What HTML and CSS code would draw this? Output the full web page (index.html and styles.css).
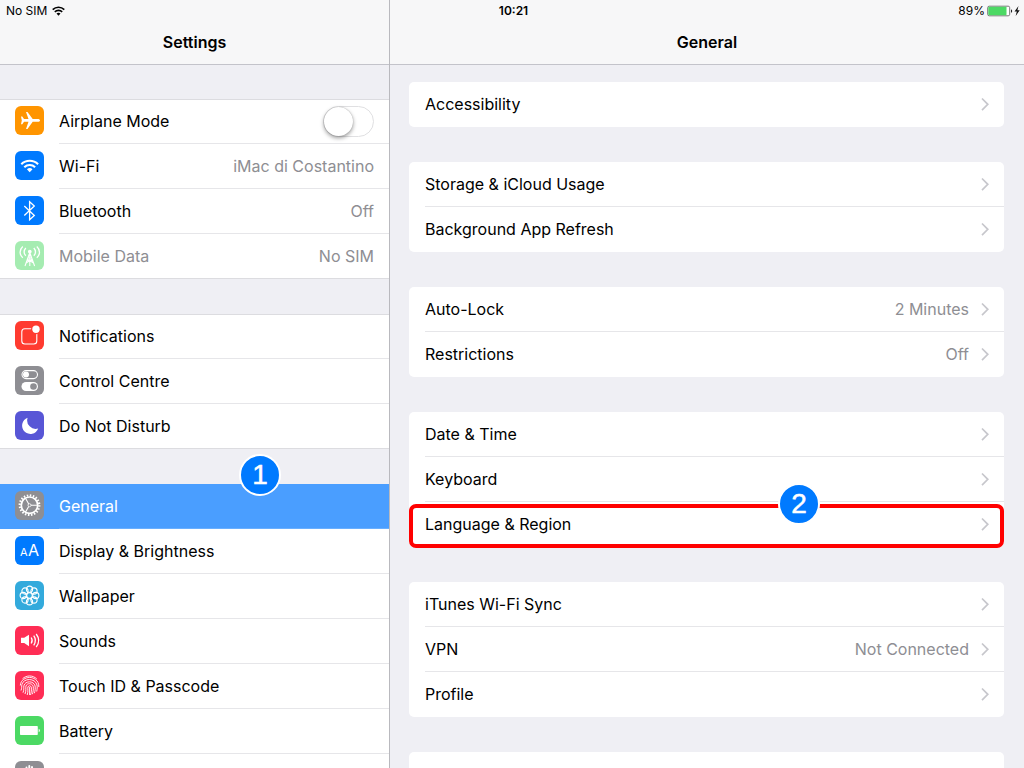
FILE: index.html
```html
<!DOCTYPE html>
<html lang="en-GB">
<head>
<meta charset="utf-8">
<meta name="viewport" content="width=device-width, initial-scale=1">
<title>Settings</title>
<link rel="stylesheet" href="styles.css">
</head>
<body>
<svg class="defs" aria-hidden="true">
  <symbol id="chevron" viewBox="0 0 8 14"><path d="M1 1.500l5.800 5.800L1 13.100" fill="none" stroke="#c7c7cc" stroke-width="1.700"/></symbol>
</svg>
<div class="app">
  <div class="status">
    <div class="status-left">
      <span>No SIM</span>
      <svg width="13" height="10" viewBox="0 0 13 10" fill="none" stroke="#000" stroke-width="1.6"><path d="M.7 3.6a8.3 8.3 0 0 1 11.6 0M2.8 5.9a5.3 5.3 0 0 1 7.4 0"/><path d="M4.5 7.6a2.9 2.9 0 0 1 4 0L6.500 9.800z" fill="#000" stroke="none"/></svg>
    </div>
    <time class="clock">10:21</time>
    <div class="status-right">
      <span>89%</span>
      <svg width="34" height="12" viewBox="0 0 34 12"><rect x=".7" y="1.200" width="22" height="9.600" rx="1.500" fill="#fff" stroke="#777"/><rect x="1.300" y="1.800" width="18.200" height="8.400" rx=".8" fill="#4cd964"/><path d="M24 4.200c1.600.5 1.600 3.100 0 3.600z" fill="#222"/><path d="M31.500 1l-4 5.600h2.300L28.700 11l4-5.800h-2.300z" fill="#111"/></svg>
    </div>
  </div>

  <aside class="pane sidebar">
    <header class="bar"><h1>Settings</h1></header>
    <nav class="scroll" aria-label="Settings">
      <div class="group">
        <div class="item">
          <svg class="icon orange" viewBox="0 0 29 29"><path d="M25 14.400c0-.8-1-1.400-2.300-1.400h-5L12.500 6H11l2.500 7H9l-1.700-2.500H6l.8 3.900L6 18.300h1.300L9 15.800h4.500L11 23h1.500l5.200-7.200h5c1.300 0 2.300-.6 2.300-1.400z" fill="#fff"/></svg>
          <div class="body"><label class="label" for="airplane">Airplane Mode</label><input class="switch" id="airplane" type="checkbox" role="switch"></div>
        </div>
        <a class="item" href="#wifi">
          <svg class="icon blue" viewBox="0 0 29 29" fill="none" stroke="#fff" stroke-width="2.100"><path d="M6.300 13.200a12 12 0 0 1 16.800 0M9.300 16.200a7.800 7.800 0 0 1 10.800 0"/><path d="M11.900 18.300a4 4 0 0 1 5.600 0l-2.800 3z" fill="#fff" stroke="none"/></svg>
          <span class="body"><span class="label">Wi-Fi</span><span class="value">iMac di Costantino</span></span>
        </a>
        <a class="item" href="#bluetooth">
          <svg class="icon blue" viewBox="0 0 29 29" fill="none" stroke="#fff" stroke-width="1.300"><path d="M9.300 10l10 9.500-4.700 4.300V5.800l4.700 4.200-10 9.500"/></svg>
          <span class="body"><span class="label">Bluetooth</span><span class="value">Off</span></span>
        </a>
        <a class="item" href="#mobile">
          <svg class="icon mint" viewBox="0 0 29 29" fill="none" stroke="#fff" stroke-width="1.100"><path d="M10 25l4.800-13.500L19.600 25M11 22l6.500-4M18.600 22L12 18M12.800 17h4M14.800 12v13"/><circle cx="14.800" cy="10.500" r="1.300" fill="#fff"/><path d="M10.800 7c-2 2.300-2 5.500 0 7.800M18.800 7c2 2.300 2 5.500 0 7.800M7.800 5.500c-3.600 3.300-3.600 8 0 11.300M21.800 5.500c3.600 3.300 3.600 8 0 11.300" stroke-width="1.300"/></svg>
          <span class="body"><span class="label muted">Mobile Data</span><span class="value">No SIM</span></span>
        </a>
      </div>

      <div class="group">
        <a class="item" href="#notifications">
          <svg class="icon red" viewBox="0 0 29 29"><rect x="6.800" y="7.700" width="15" height="15.300" rx="3" fill="none" stroke="#fff" stroke-width="1.100"/><circle cx="21" cy="8.300" r="5" fill="#ff3b30"/><circle cx="21" cy="8.300" r="3.700" fill="#fff"/></svg>
          <span class="body"><span class="label">Notifications</span></span>
        </a>
        <a class="item" href="#control-centre">
          <svg class="icon grey" viewBox="0 0 29 29"><rect x="7" y="4.600" width="15.500" height="8" rx="4" fill="none" stroke="#fff" stroke-width="1.100"/><circle cx="11" cy="8.600" r="3" fill="#fff"/><rect x="6.500" y="16" width="16.500" height="9" rx="4.500" fill="#fff"/><circle cx="18.500" cy="20.500" r="3.300" fill="#8e8e93"/></svg>
          <span class="body"><span class="label">Control Centre</span></span>
        </a>
        <a class="item" href="#dnd">
          <svg class="icon indigo" viewBox="0 0 29 29"><path d="M12.600 6.800a8.300 8.300 0 1 0 10.600 10.700A8.500 8.500 0 0 1 12.600 6.800z" fill="#fff"/></svg>
          <span class="body"><span class="label">Do Not Disturb</span></span>
        </a>
      </div>

      <div class="group">
        <a class="item selected" href="#general" aria-current="page">
          <svg class="icon grey" viewBox="0 0 29 29" fill="none" stroke="#fff"><circle cx="14.500" cy="14.200" r="9.800" stroke-width="2.200" stroke-dasharray="1.500 1.579"/><circle cx="14.500" cy="14.200" r="8.200" stroke-width="1.700"/><circle cx="14.500" cy="14.200" r="1.500" stroke-width=".8"/><path d="M16 14.200h7M13.700 12.900L10.400 7.100M13.700 15.500l-3.300 5.800" stroke-width="1.100"/></svg>
          <span class="body"><span class="label">General</span></span>
          <span class="step step-one">1</span>
        </a>
        <a class="item" href="#display">
          <svg class="icon blue aa" viewBox="0 0 29 29" fill="#fff"><text x="5" y="20" font-size="11">A</text><text x="13" y="20" font-size="16">A</text></svg>
          <span class="body"><span class="label">Display &amp; Brightness</span></span>
        </a>
        <a class="item" href="#wallpaper">
          <svg class="icon cyan" viewBox="0 0 29 29" fill="none" stroke="#fff" stroke-width="1.100"><circle cx="14.500" cy="14.500" r="2.800"/><circle cx="14.500" cy="8.200" r="3.100"/><circle cx="19" cy="10" r="3.100"/><circle cx="20.800" cy="14.500" r="3.100"/><circle cx="19" cy="19" r="3.100"/><circle cx="14.500" cy="20.800" r="3.100"/><circle cx="10" cy="19" r="3.100"/><circle cx="8.200" cy="14.500" r="3.100"/><circle cx="10" cy="10" r="3.100"/></svg>
          <span class="body"><span class="label">Wallpaper</span></span>
        </a>
        <a class="item" href="#sounds">
          <svg class="icon pink" viewBox="0 0 29 29" fill="none" stroke="#fff" stroke-width="1.300"><path d="M6 11.800h3.200L14 8.800v11.500l-4.800-3.200H6z" fill="#fff" stroke="none"/><path d="M16.200 11.500c1.300 2 1.300 4 0 6M18.700 9.700c2.300 3.200 2.300 6.300 0 9.600M21.200 8c3.300 4.300 3.300 8.700 0 13"/></svg>
          <span class="body"><span class="label">Sounds</span></span>
        </a>
        <a class="item" href="#touch-id">
          <svg class="icon pink" viewBox="0 0 29 29" fill="none" stroke="#fff" stroke-width=".9"><path d="M7.500 7.800C11.500 4 18 4 21.800 8M5.300 14.500c.2-3.200 1.700-5 3.300-6.100 3.600-2.600 8.300-2.600 11.900 0 2.300 1.700 3.500 4.500 3.300 7.600M6 19.500c1-2.500.5-4 .9-6 1.600-6.600 13.300-6.800 15.100.5.4 2 .2 4-.3 6.500M8 21.700c1.300-3 .5-5 .9-7 1.200-5.200 9.900-5.200 11.200.3.400 2.500 0 4.700-.7 7.200M10 23c1.500-4 .5-5.700.9-7.800 1-3.400 6.200-3.400 7.300.2.400 2.600 0 5.100-.8 7.800M12.200 24c1.300-4 .3-6 .7-8 .6-1.600 2.800-1.600 3.400.2.400 2.700 0 5.300-.8 7.800M14.600 16v8"/></svg>
          <span class="body"><span class="label">Touch ID &amp; Passcode</span></span>
        </a>
        <a class="item" href="#battery">
          <svg class="icon green" viewBox="0 0 29 29" fill="#fff"><rect x="5" y="10" width="17.800" height="9" rx=".8"/><path d="M23.700 12.800c1.600.5 1.600 2.900 0 3.400z"/></svg>
          <span class="body"><span class="label">Battery</span></span>
        </a>
        <a class="item" href="#privacy">
          <svg class="icon grey" viewBox="0 0 29 29" fill="none" stroke="#fff" stroke-width="1.900" stroke-linecap="round"><path d="M11.500 14V6.500M14.300 13V5M17 13.500V6M19.500 15V9"/><path d="M10.500 13h10v5c0 4-2 6-5 6-3.500 0-5-2.500-8-8l3 1z" fill="#fff" stroke="none"/></svg>
          <span class="body"><span class="label">Privacy</span></span>
        </a>
      </div>
    </nav>
  </aside>

  <main class="pane detail">
    <header class="bar"><h2>General</h2></header>
    <div class="scroll cards">
      <div class="card">
        <a class="row" href="#accessibility"><span class="label">Accessibility</span><svg class="chevron"><use href="#chevron"/></svg></a>
      </div>
      <div class="card">
        <a class="row" href="#storage"><span class="label">Storage &amp; iCloud Usage</span><svg class="chevron"><use href="#chevron"/></svg></a>
        <a class="row" href="#refresh"><span class="label">Background App Refresh</span><svg class="chevron"><use href="#chevron"/></svg></a>
      </div>
      <div class="card">
        <a class="row" href="#auto-lock"><span class="label">Auto-Lock</span><span class="value">2 Minutes</span><svg class="chevron"><use href="#chevron"/></svg></a>
        <a class="row" href="#restrictions"><span class="label">Restrictions</span><span class="value">Off</span><svg class="chevron"><use href="#chevron"/></svg></a>
      </div>
      <div class="card">
        <a class="row" href="#date"><span class="label">Date &amp; Time</span><svg class="chevron"><use href="#chevron"/></svg></a>
        <a class="row" href="#keyboard"><span class="label">Keyboard</span><svg class="chevron"><use href="#chevron"/></svg></a>
        <a class="row outlined" href="#language"><span class="label">Language &amp; Region</span><svg class="chevron"><use href="#chevron"/></svg><span class="step step-two">2</span></a>
      </div>
      <div class="card">
        <a class="row" href="#itunes"><span class="label">iTunes Wi-Fi Sync</span><svg class="chevron"><use href="#chevron"/></svg></a>
        <a class="row" href="#vpn"><span class="label">VPN</span><span class="value">Not Connected</span><svg class="chevron"><use href="#chevron"/></svg></a>
        <a class="row" href="#profile"><span class="label">Profile</span><svg class="chevron"><use href="#chevron"/></svg></a>
      </div>
      <div class="card">
        <a class="row" href="#regulatory"><span class="label">Regulatory</span><svg class="chevron"><use href="#chevron"/></svg></a>
      </div>
    </div>
  </main>
</div>
</body>
</html>
```
FILE: styles.css
```css
* { box-sizing: border-box; }

body {
  margin: 0;
  background: #efeff4;
  color: #000;
  font: 16px/20px Inter, "Liberation Sans", sans-serif;
}

a { color: inherit; text-decoration: none; }
.defs { position: absolute; width: 0; height: 0; }

.app {
  display: grid;
  grid-template: 20px minmax(0, 1fr) / 390px 1fr;
  height: 100vh;
  overflow: hidden;
}

/* Status bar, layered over the top of both panes */
.status {
  grid-area: 1 / 1 / 2 / 3;
  z-index: 1;
  display: grid;
  grid-template-columns: 1fr auto 1fr;
  align-items: center;
  padding: 1px 3px 0 6px;
  font-size: 12px;
}
.status-left, .status-right { display: flex; align-items: center; gap: 5px; }
.status-right { justify-content: flex-end; gap: 2px; }
.clock { font-weight: 600; }

/* Panes */
.pane { grid-row: 1 / 3; display: flex; flex-direction: column; min-height: 0; min-width: 0; }
.sidebar { grid-column: 1; border-right: 1px solid #b9b9be; }
.detail { grid-column: 2; }
.bar {
  flex: none;
  height: 65px;
  padding-top: 20px;
  border-bottom: 1px solid #c3c3ca;
  background: #f7f7f8;
  text-align: center;
}
.bar h1, .bar h2 { margin: 0; font-size: 16px; font-weight: 600; line-height: 44px; }
.scroll { flex: 1; min-height: 0; overflow: hidden; }

/* Sidebar list */
.sidebar .scroll { padding-top: 34px; }
.group { margin-bottom: 35px; background: #fff; box-shadow: inset 0 1px #dcdce0, inset 0 -1px #dcdce0; }
.item { position: relative; display: flex; gap: 15px; height: 45px; padding-left: 15px; }
.icon { flex: none; width: 29px; height: 29px; margin-top: 7px; border-radius: 6px; }
.body {
  flex: 1;
  display: flex;
  align-items: center;
  padding-right: 15px;
  border-bottom: 1px solid #e6e6e9;
}
.item:last-child .body { border-bottom-color: transparent; }
.label { flex: 1; }
.muted, .value { color: #8e8e93; }
.selected { background: #4a9eff; color: #fff; }
.selected .body { border-bottom-color: #69afff; }

.orange { background: #ff9500; }
.blue { background: #007aff; }
.mint { background: #a5ecb1; }
.red { background: #ff3b30; }
.grey { background: #8e8e93; }
.indigo { background: #5856d6; }
.cyan { background: #33aadc; }
.pink { background: #ff2d55; }
.green { background: #4cd964; }
.aa { font-family: Inter, sans-serif; }

.switch {
  appearance: none;
  display: flex;
  width: 51px;
  height: 31px;
  margin: 0;
  border: 1px solid #e0e0e2;
  border-radius: 16px;
  background: #fff;
}
.switch::before {
  content: "";
  width: 29px;
  height: 29px;
  border-radius: 50%;
  background: #fff;
  box-shadow: 0 0 1px 0 #999, 0 2px 4px #0006;
}
.switch:checked { justify-content: flex-end; background: #4cd964; }

/* Detail cards */
.cards { display: flex; flex-direction: column; gap: 35px; padding: 17px 20px 0 19px; }
.card { flex: none; padding-left: 16px; border-radius: 5px; background: #fff; }
.row {
  position: relative;
  display: flex;
  align-items: center;
  gap: 12px;
  height: 45px;
  padding-right: 15px;
  border-bottom: 1px solid #e6e6e9;
}
.row:last-child { border-bottom-color: transparent; }
.chevron { flex: none; width: 8px; height: 14px; }

/* Walkthrough annotations */
.outlined::after {
  content: "";
  position: absolute;
  inset: 2px 0 -2px -16px;
  border: 4px solid #f00;
  border-radius: 7px;
}
.step {
  position: absolute;
  z-index: 1;
  width: 42px;
  height: 42px;
  border: 2px solid #fff;
  border-radius: 50%;
  background: #007aff;
  color: #fff;
  font: 28px/38px "Liberation Sans", sans-serif;
  -webkit-text-stroke: 0.5px #fff;
  text-align: center;
}
.step-one { top: -30px; left: 239px; }
.step-two { top: -19px; right: 184px; }
```
